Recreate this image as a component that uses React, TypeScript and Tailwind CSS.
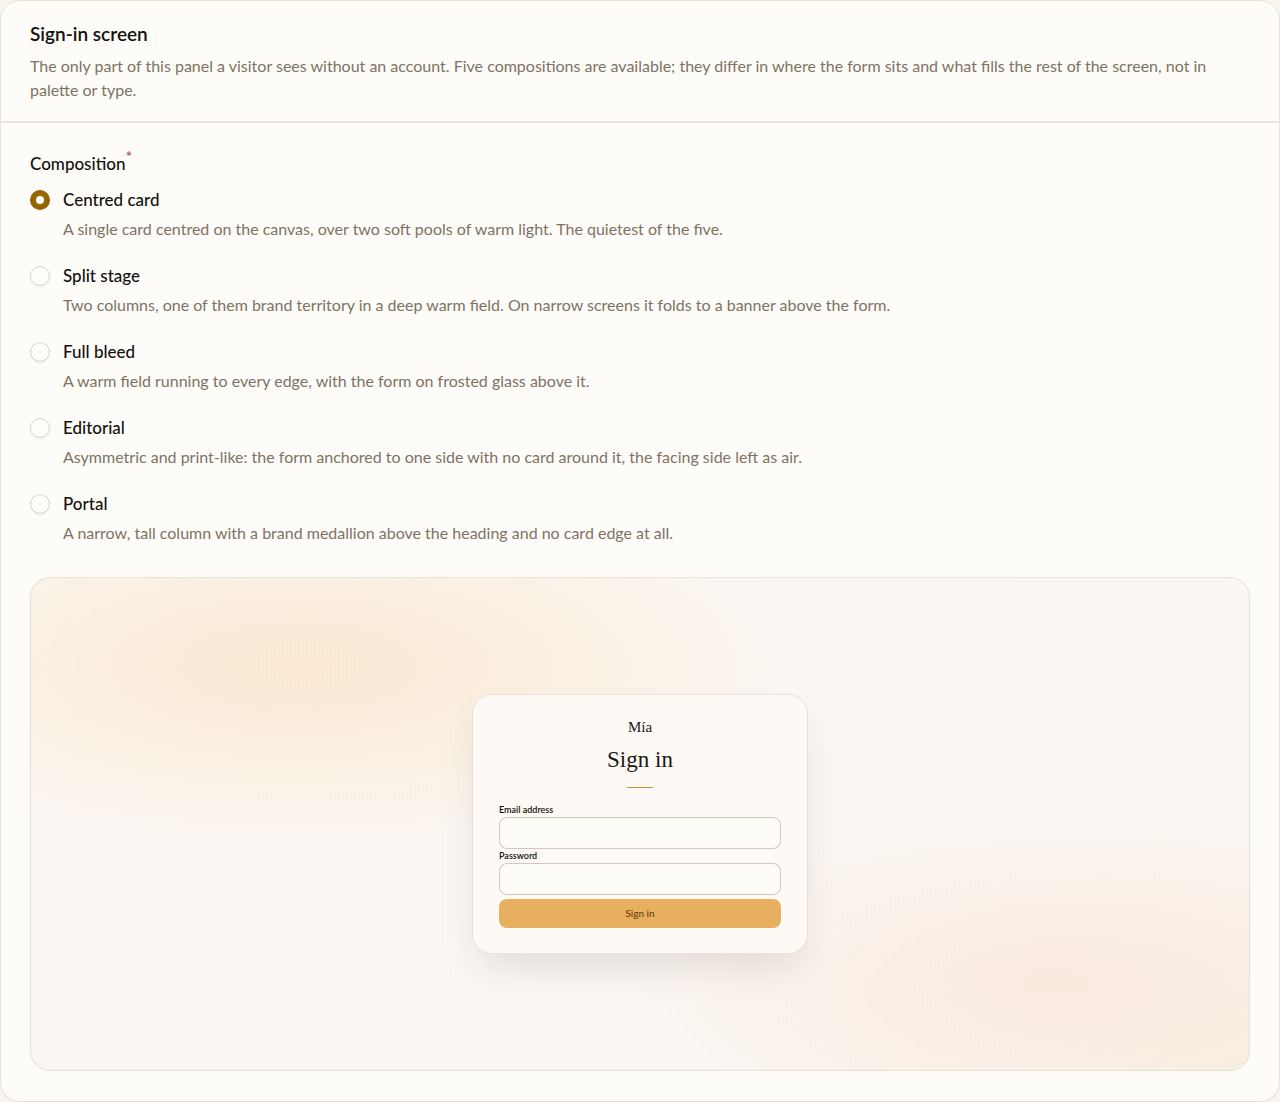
import React from 'react';

interface Composition {
  value: string;
  label: string;
  desc: string;
}

const COMPOSITIONS: Composition[] = [
  {
    value: 'centred',
    label: 'Centred card',
    desc: 'A single card centred on the canvas, over two soft pools of warm light. The quietest of the five.'
  },
  {
    value: 'split',
    label: 'Split stage',
    desc: 'Two columns, one of them brand territory in a deep warm field. On narrow screens it folds to a banner above the form.'
  },
  {
    value: 'bleed',
    label: 'Full bleed',
    desc: 'A warm field running to every edge, with the form on frosted glass above it.'
  },
  {
    value: 'editorial',
    label: 'Editorial',
    desc: 'Asymmetric and print-like: the form anchored to one side with no card around it, the facing side left as air.'
  },
  {
    value: 'portal',
    label: 'Portal',
    desc: 'A narrow, tall column with a brand medallion above the heading and no card edge at all.'
  }
];

function CompositionPicker() {
  const [selected, setSelected] = React.useState('centred');

  return (
    <fieldset>
      <legend className="text-[17px] font-medium leading-6 text-[#14110d]">
        Composition<sup className="text-[16px] text-[#b5543f]">*</sup>
      </legend>
      <div className="mt-[10px] flex flex-col gap-[18px]">
        {COMPOSITIONS.map(({ value, label, desc }) => (
          <div key={value} className="flex gap-[13px]">
            <input
              type="radio"
              id={`composition-${value}`}
              name="composition"
              value={value}
              checked={selected === value}
              onChange={() => setSelected(value)}
              aria-describedby={`composition-${value}-desc`}
              className="mt-1 size-5 shrink-0 appearance-none rounded-full border border-[#d6d3cd] bg-[#fefdfa] shadow-xs checked:border-[6px] checked:border-[#966400] checked:bg-white"
            />
            <div className="flex flex-col">
              <label
                htmlFor={`composition-${value}`}
                className="text-[17px] font-medium leading-7 text-[#14110d]"
              >
                {label}
              </label>
              <p id={`composition-${value}-desc`} className="text-[16px] leading-[30px] text-[#7f7264]">
                {desc}
              </p>
            </div>
          </div>
        ))}
      </div>
    </fieldset>
  );
}

// Miniature of the visitor-facing screen
function SignInPreview() {
  return (
    <div className="mt-[29px] flex min-h-[494px] items-center justify-center rounded-[20px] border border-[#e8e1d6] bg-[#fbf7f2] bg-[repeating-linear-gradient(0deg,rgba(120,90,50,0.012)_0px_1px,transparent_1px_4px),repeating-linear-gradient(90deg,rgba(120,90,50,0.01)_0px_1px,transparent_1px_4px),radial-gradient(ellipse_40%_36%_at_22%_18%,#fbe9d3,rgba(251,233,211,0)),radial-gradient(ellipse_34%_32%_at_84%_82%,#faebe1,rgba(250,235,225,0)),radial-gradient(ellipse_40%_50%_at_100%_100%,#faf0e3,rgba(250,240,227,0))]">
      <form
        onSubmit={e => e.preventDefault()}
        className="flex w-full max-w-[336px] flex-col rounded-[20px] border border-[#e9e3da] bg-[#fdfaf5] px-[26px] pt-[22px] pb-[25px] shadow-[0_20px_40px_-12px_rgba(60,50,40,0.15)]"
      >
        <div className="flex flex-col items-center font-['Liberation_Serif',serif] text-[#1b1712]">
          <span className="text-[15px] leading-5">Mía</span>
          <h3 className="mt-[9px] text-[23px] leading-7">Sign in</h3>
          <span className="mt-[13px] h-px w-[26px] bg-[#c98f35]" />
        </div>
        <label htmlFor="preview-email" className="mt-[15px] text-[9px] font-semibold leading-[14px] text-[#14110d]">
          Email address
        </label>
        <input
          id="preview-email"
          type="email"
          className="h-8 rounded-lg border border-[#cfcabd] bg-[#fdfcf8] px-2 text-[10px]"
        />
        <label htmlFor="preview-password" className="text-[9px] font-semibold leading-[14px] text-[#14110d]">
          Password
        </label>
        <input
          id="preview-password"
          type="password"
          className="h-8 rounded-lg border border-[#cfcabd] bg-[#fdfcf8] px-2 text-[10px]"
        />
        <button type="submit" className="mt-1 h-[29px] rounded-lg bg-[#e8af60] text-[10px] font-medium text-[#6a4108]">
          Sign in
        </button>
      </form>
    </div>
  );
}

export default function App() {
  return (
    <main className="bg-[#faf5ef] font-[Lato,sans-serif]">
      <section className="rounded-[20px] border border-[#ece2d5] bg-[#fdfcf8] shadow-xs">
        <header className="border-b-2 border-[#ede3d8] px-[29px] pt-[19px] pb-[19px]">
          <h2 className="text-[19px] font-semibold leading-7 text-[#14110d]">Sign-in screen</h2>
          <p className="mt-[6px] text-[16px] leading-6 text-[#7f7264]">
            The only part of this panel a visitor sees without an account. Five compositions are available; they
            differ in where the form sits and what fills the rest of the screen, not in palette or type.
          </p>
        </header>
        <div className="px-[29px] pt-[29px] pb-[30px]">
          <CompositionPicker />
          <SignInPreview />
        </div>
      </section>
    </main>
  );
}
